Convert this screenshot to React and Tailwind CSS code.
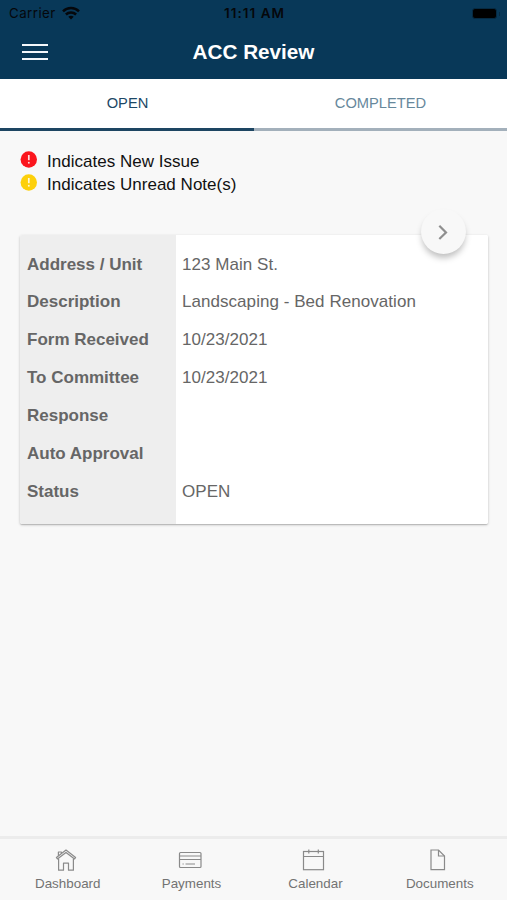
import { useState } from 'react';

const TABS = ['OPEN', 'COMPLETED'];

const FIELDS = [
  { label: 'Address / Unit', value: '123 Main St.' },
  { label: 'Description',    value: 'Landscaping - Bed Renovation' },
  { label: 'Form Received',  value: '10/23/2021' },
  { label: 'To Committee',   value: '10/23/2021' },
  { label: 'Response',       value: '' },
  { label: 'Auto Approval',  value: '' },
  { label: 'Status',         value: 'OPEN' },
];

function WifiIcon() {
  return (
    <svg className="w-[18px] h-[14px] -mt-px" viewBox="0 0 18 14" fill="none" stroke="#05070b" strokeWidth="2.5">
      <path d="M1 5.3C5.5 .9 12.5 .9 17 5.3" />
      <path d="M3.9 8.5c2.9-2.8 7.3-2.8 10.2 0" />
      <path d="M9 13.6 6.3 10.8c1.5-1.4 3.9-1.4 5.4 0z" fill="#05070b" stroke="none" />
    </svg>
  );
}

function HomeIcon() {
  return (
    <svg className="w-6 h-6" viewBox="0 0 24 24" fill="none" stroke="#8a8a8a" strokeWidth="1.2" strokeLinejoin="round">
      <path d="M4.6 10.8v11.4h4.9v-7h5v7h4.9V10.8" />
      <path d="M2.4 9.4 12 2l9.6 7.4-1 1.5L12 4.4l-8.6 6.5z" />
      <path d="M4.4 7.8V4h3v1.5" />
    </svg>
  );
}

function CardIcon() {
  return (
    <svg className="w-6 h-6" viewBox="0 0 24 24" fill="none" stroke="#8a8a8a" strokeWidth="1.2">
      <rect x="1.5" y="4.5" width="21.5" height="15" rx="1" />
      <path d="M1.5 8h21.5M1.5 11.5h21.5M4.5 16h1.2M7.5 16h9.5" />
    </svg>
  );
}

function CalendarIcon() {
  return (
    <svg className="w-6 h-6" viewBox="0 0 24 24" fill="none" stroke="#8a8a8a" strokeWidth="1.2">
      <rect x="1.5" y="3.5" width="20" height="18.2" />
      <path d="M1.5 8.5h20M6.8 1.5v4M16.3 1.5v4" />
    </svg>
  );
}

function DocumentIcon() {
  return (
    <svg className="w-6 h-6" viewBox="0 0 24 24" fill="none" stroke="#8a8a8a" strokeWidth="1.2">
      <path d="M3 2h7.5l6 6v13.7H3z" />
      <path d="M10.5 2v6h6" />
    </svg>
  );
}

const NAV = [
  { label: 'Dashboard', Icon: HomeIcon,     shift: 'pr-[3px]' },
  { label: 'Payments',  Icon: CardIcon,     shift: 'pr-[3px]' },
  { label: 'Calendar',  Icon: CalendarIcon, shift: 'pr-1' },
  { label: 'Documents', Icon: DocumentIcon, shift: 'pr-0' },
];

function AlertDot({ color }) {
  return (
    <svg className="w-[17px] h-[17px] shrink-0 -mt-1" viewBox="0 0 17 17">
      <circle cx="8.8" cy="8.5" r="8.2" className={color} />
      <path d="M8.8 4v5.2" stroke="#fff" strokeOpacity=".85" strokeWidth="1.7" />
      <path d="M8.8 10.9v1.7" stroke="#fff" strokeOpacity=".85" strokeWidth="1.7" />
    </svg>
  );
}

export default function App() {
  const [tab, setTab] = useState('OPEN');

  return (
    <div className="w-full h-screen flex flex-col overflow-hidden bg-[#f8f8f8] font-['Liberation_Sans',Arial,sans-serif]">
      <header className="h-[79px] shrink-0 bg-[#083858]">
        {/* Status bar */}
        <div className="h-[27px] grid grid-cols-3 items-center pl-[9px] pr-[7px] text-[13.3px] leading-none text-[#05070b] font-[Inter,sans-serif]">
          <div className="flex items-center gap-[6px]">
            <span className="pt-px tracking-[0.45px]">Carrier</span>
            <WifiIcon />
          </div>
          <span className="pt-px text-center font-semibold text-[13.5px] tracking-[1.05px]">11:11 AM</span>
          <div className="flex items-center justify-end gap-[2px]">
            <span className="w-[25px] h-[11px] rounded-[3px] border border-[#062a42] bg-black" />
            <span className="w-px h-1 bg-[#062a42]" />
          </div>
        </div>
        <div className="h-[50px] grid grid-cols-[60px_1fr_60px] items-center">
          <button className="ml-[22px] w-[26px] flex flex-col gap-[5px]" aria-label="Menu">
            <span className="w-full h-[2px] bg-[#f4f8fc]" />
            <span className="w-full h-[2px] bg-[#f4f8fc]" />
            <span className="w-full h-[2px] bg-[#f4f8fc]" />
          </button>
          <h1 className="text-center text-[20.7px] font-bold text-white">ACC Review</h1>
        </div>
      </header>

      <div className="h-[52px] shrink-0 flex bg-white">
        {TABS.map(t => (
          <button
            key={t}
            onClick={() => setTab(t)}
            className={`flex-1 text-[14.7px] border-b-[3px] ${tab === t ? 'pl-px text-[#1c4766] border-[#1d4562]' : 'text-[#67889c] border-[#a3b0bb]'}`}
          >
            {t}
          </button>
        ))}
      </div>

      <main className="flex-1 px-5 pt-[19px]">
        {/* Legend */}
        <div className="text-[17px] leading-[23px] tracking-[0.02px] text-[#111]">
          <div className="flex items-center gap-[10px]">
            <AlertDot color="fill-[#fb151d]" />
            <span>Indicates New Issue</span>
          </div>
          <div className="flex items-center gap-[10px]">
            <AlertDot color="fill-[#fdd00b]" />
            <span>Indicates Unread Note(s)</span>
          </div>
        </div>

        <section className="relative mt-[39px] w-[468px] h-[289px] rounded-[2px] bg-white shadow-[0_1px_3px_rgba(0,0,0,0.2),0_1px_1px_rgba(0,0,0,0.15)]">
          <dl className="h-full pt-[10.6px] rounded-[2px] text-[17px] leading-[37.85px] tracking-[0.05px] text-[#666] bg-[linear-gradient(to_right,#eee_156px,#fff_156px)]">
            {FIELDS.map(f => (
              <div key={f.label} className="flex h-[37.85px]">
                <dt className="w-[156px] pl-[7px] font-bold tracking-normal">{f.label}</dt>
                <dd className="pl-[6px]">{f.value}</dd>
              </div>
            ))}
          </dl>
          <button
            className="absolute right-[22px] -top-[26px] w-[45px] h-[45px] rounded-full bg-[#f8f8f8] flex items-center justify-center shadow-[0_5px_6px_-1px_rgba(0,0,0,0.25)]"
            aria-label="Open details"
          >
            <svg className="w-3 h-4" viewBox="0 0 12 16" fill="none" stroke="#8f8f8f" strokeWidth="2.2">
              <path d="M1.3 1.8 8 8.5l-6.7 6.5" />
            </svg>
          </button>
        </section>
      </main>

      <nav className="h-[64px] shrink-0 grid grid-cols-[129.5px_124px_124px_129.5px] border-t-[3px] border-[#ececec]">
        {NAV.map(({ label, Icon, shift }, i) => (
          <button key={label} className={`flex flex-col items-center pt-[9px] ${i === 0 ? 'pl-[6px]' : i === 3 ? 'pr-[5px]' : ''}`}>
            <span className={`h-6 ${shift}`}><Icon /></span>
            <span className="mt-1 text-[13.4px] leading-4 text-[#737373]">{label}</span>
          </button>
        ))}
      </nav>
    </div>
  );
}
